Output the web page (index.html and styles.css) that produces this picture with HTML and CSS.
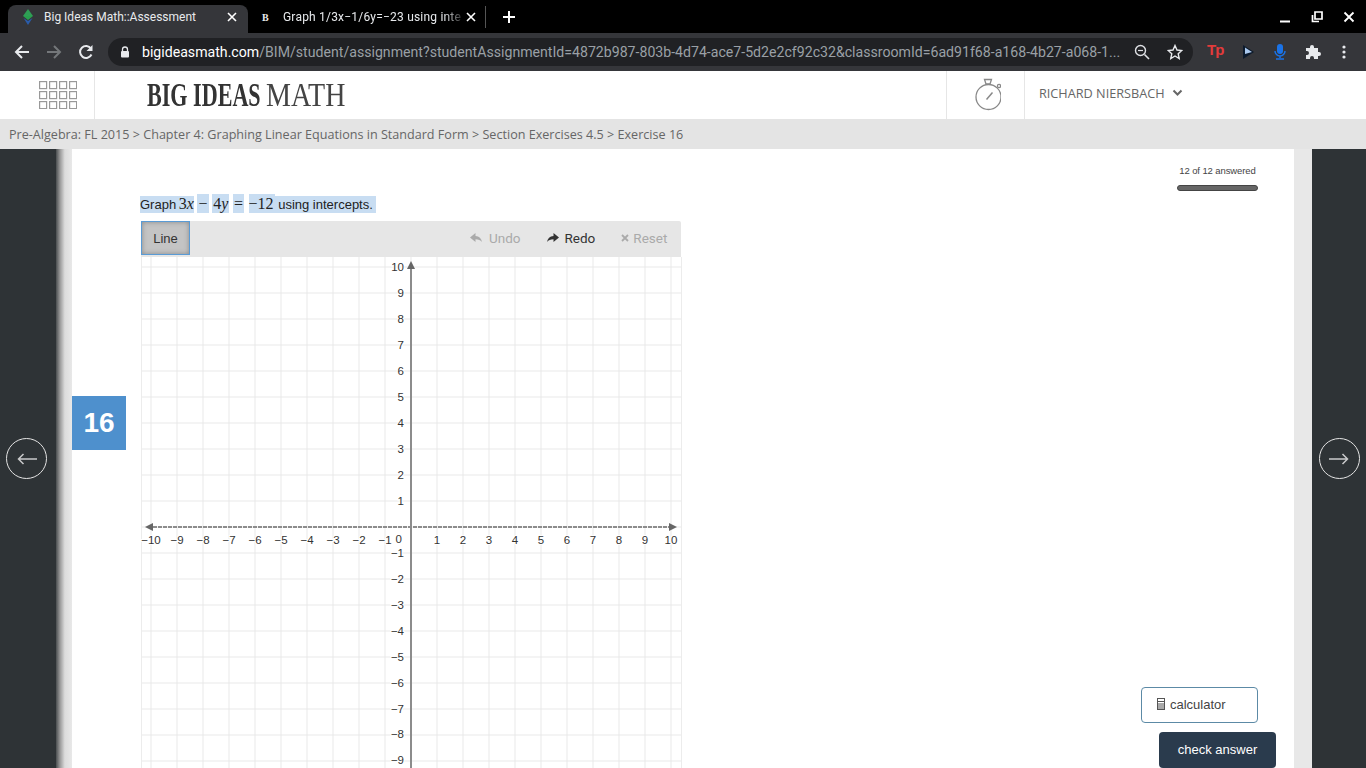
FILE: index.html
```html
<!DOCTYPE html>
<html lang="en">
<head>
  <meta charset="utf-8">
  <title>Big Ideas Math::Assessment</title>
  <link rel="stylesheet" href="styles.css">
</head>
<body>
<div class="tabbar">
  <div class="tab tab-active">
    <svg class="favicon" width="16" height="18" viewBox="0 0 16 18"><path d="M8 1l5 7H3z" fill="#2f9e55"/><path d="M3 8h10l-5 4z" fill="#27a04e"/><path d="M3.5 10L8 17l4.5-7L8 13z" fill="#2a5caa"/></svg>
    <span class="tab-title">Big Ideas Math::Assessment</span>
    <svg class="tab-x" width="10" height="10" viewBox="0 0 10 10"><path d="M1 1l8 8M9 1l-8 8" stroke="#fff" stroke-width="1.6"/></svg>
  </div>
  <div class="tab tab-other">
    <span class="favicon-b">B</span>
    <span class="tab-title tab-fade">Graph 1/3x−1/6y=−23 using inte</span>
    <svg class="tab-x" width="10" height="10" viewBox="0 0 10 10"><path d="M1 1l8 8M9 1l-8 8" stroke="#fff" stroke-width="1.6"/></svg>
  </div>
  <svg class="new-tab" width="14" height="14" viewBox="0 0 14 14"><path d="M7 1v12M1 7h12" stroke="#fff" stroke-width="2"/></svg>
  <div class="win-btns">
    <svg width="12" height="12" viewBox="0 0 12 12"><path d="M1 10.5h10" stroke="#fff" stroke-width="2"/></svg>
    <svg width="12" height="12" viewBox="0 0 12 12"><path d="M4 1h7v7H4z M1.500 4v6.500H8" fill="none" stroke="#fff" stroke-width="1.700"/></svg>
    <svg width="12" height="12" viewBox="0 0 12 12"><path d="M1.500 1.500l9 9M10.500 1.500l-9 9" stroke="#fff" stroke-width="1.800"/></svg>
  </div>
</div>

<div class="toolbar">
  <svg class="tool" width="16" height="16" viewBox="0 0 16 16"><path d="M15 8H2M8 2L2 8l6 6" fill="none" stroke="#e8eaed" stroke-width="2"/></svg>
  <svg class="tool" width="16" height="16" viewBox="0 0 16 16"><path d="M1 8h13M8 2l6 6-6 6" fill="none" stroke="#74777a" stroke-width="2"/></svg>
  <svg class="tool" width="16" height="16" viewBox="0 0 16 16"><path d="M13.500 10.500A6 6 0 1 1 13 4.500" fill="none" stroke="#e8eaed" stroke-width="2"/><path d="M14.500 1v6h-6z" fill="#e8eaed"/></svg>
  <div class="omnibox">
    <svg width="10" height="12" viewBox="0 0 10 12"><path d="M2.500 5V3.500a2.500 2.500 0 0 1 5 0V5" fill="none" stroke="#e8eaed" stroke-width="1.300"/><rect x="1" y="5" width="8" height="6.500" rx="1" fill="#e8eaed"/></svg>
    <span class="url"><b>bigideasmath.com</b>/BIM/student/assignment?studentAssignmentId=4872b987-803b-4d74-ace7-5d2e2cf92c32&amp;classroomId=6ad91f68-a168-4b27-a068-1...</span>
    <svg width="16" height="16" viewBox="0 0 16 16"><circle cx="6.500" cy="6.500" r="5" fill="none" stroke="#dfe1e5" stroke-width="1.400"/><path d="M10.500 10.500l4.500 4.500" stroke="#dfe1e5" stroke-width="1.600"/><path d="M4 6.500h5" stroke="#dfe1e5" stroke-width="1.200"/></svg>
    <svg class="star" width="16" height="16" viewBox="0 0 16 16"><path d="M8 1.500l2 4.500 4.800.5-3.600 3.200 1 4.800L8 12l-4.200 2.500 1-4.800L1.200 6.500 6 6z" fill="none" stroke="#e8eaed" stroke-width="1.400"/></svg>
  </div>
  <div class="ext-icons">
    <span class="ext-tp">Tp</span>
    <svg width="14" height="16" viewBox="0 0 14 16"><path d="M2 1l11 7-11 7z" fill="#0c1a2c"/><path d="M4 3.500l7 4.500-7 2z" fill="#a9c8ee"/></svg>
    <svg width="14" height="18" viewBox="0 0 14 18"><rect x="4" y="1" width="6" height="10" rx="3" fill="#1a73e8"/><path d="M2 8a5 5 0 0 0 10 0M7 13v2M3 16h8" fill="none" stroke="#1a73e8" stroke-width="1.500"/></svg>
    <svg width="16" height="16" viewBox="0 0 16 16"><path d="M1 4h4V3a2 2 0 0 1 4 0v1h4v4h1a2 2 0 0 1 0 4h-1v3H9v-1a2 2 0 0 0-4 0v1H1v-4h1a2 2 0 0 0 0-4H1z" fill="#e8eaed"/></svg>
    <svg class="ext-dots" width="4" height="16" viewBox="0 0 4 16"><circle cx="2" cy="3" r="1.600" fill="#e8eaed"/><circle cx="2" cy="8" r="1.600" fill="#e8eaed"/><circle cx="2" cy="13" r="1.600" fill="#e8eaed"/></svg>
  </div>
</div>

<header class="site-head">
  <div class="apps-cell">
    <svg width="38" height="28" viewBox="0 0 38 28" fill="none" stroke="#999" stroke-width="1.200">
      <rect x=".6" y=".6" width="7" height="7"/><rect x="10.600" y=".6" width="7" height="7"/><rect x="20.600" y=".6" width="7" height="7"/><rect x="30.600" y=".6" width="7" height="7"/>
      <rect x=".6" y="10.600" width="7" height="7"/><rect x="10.600" y="10.600" width="7" height="7"/><rect x="20.600" y="10.600" width="7" height="7"/><rect x="30.600" y="10.600" width="7" height="7"/>
      <rect x=".6" y="20.600" width="7" height="7"/><rect x="10.600" y="20.600" width="7" height="7"/><rect x="20.600" y="20.600" width="7" height="7"/><rect x="30.600" y="20.600" width="7" height="7"/>
    </svg>
  </div>
  <div class="logo"><span class="logo-big">BIG IDEAS</span><span class="logo-math">MATH</span></div>
  <div class="timer-cell">
    <svg width="30" height="34" viewBox="0 0 30 34" fill="none" stroke="#888" stroke-width="1.300">
      <circle cx="17.500" cy="19" r="12.500"/><path d="M13.500 1.500h7l-1.500 4.500h-4z"/><circle cx="28" cy="8" r="1.600"/><path d="M15.500 21.500l6-7" stroke-width="1.500"/>
    </svg>
  </div>
  <div class="user-cell">
    <span>RICHARD NIERSBACH</span>
    <svg width="11" height="8" viewBox="0 0 11 8"><path d="M1.500 1.500l4 4 4-4" fill="none" stroke="#666" stroke-width="2"/></svg>
  </div>
</header>

<nav class="crumbs">Pre-Algebra: FL 2015 &gt; Chapter 4: Graphing Linear Equations in Standard Form &gt; Section Exercises 4.5 &gt; Exercise 16</nav>

<main class="stage">
  <aside class="side">
    <div class="nav-circle"><svg width="20" height="12" viewBox="0 0 20 12"><path d="M20 6H1.500M6.500 1L1.500 6l5 5" fill="none" stroke="#c9cacb" stroke-width="1.500"/></svg></div>
  </aside>
  <div class="gutter gutter-left"></div>
  <section class="sheet">
    <div class="qnum">16</div>
    <div class="question">
      <p class="prompt"><span class="sel">Graph <span class="m m-first">3<i>x</i></span></span> <span class="sel m m-op">−</span> <span class="sel m m-op">4<i>y</i></span> <span class="sel m m-op">=</span> <span class="sel m m-neg">−12</span><span class="sel">&nbsp;using intercepts.&nbsp;</span></p>
      <div class="graph-tools">
        <button class="btn-line" type="button">Line</button>
        <span class="tool-item tool-off tool-undo"><svg width="13" height="10" viewBox="0 0 13 10"><path d="M5.500 0L0 4.500 5.500 9V6.300c3 0 5 .8 6.500 2.700-.5-3.500-2.800-5.700-6.500-6z" fill="#aaa"/></svg>Undo</span>
        <span class="tool-item tool-redo"><svg width="13" height="10" viewBox="0 0 13 10"><path d="M7.500 0L13 4.500 7.500 9V6.300c-3 0-5 .8-6.500 2.700.5-3.500 2.800-5.700 6.500-6z" fill="#333"/></svg>Redo</span>
        <span class="tool-item tool-off tool-reset"><svg width="8" height="8" viewBox="0 0 8 8"><path d="M1 1l6 6M7 1L1 7" stroke="#aaa" stroke-width="1.800"/></svg>Reset</span>
      </div>
      <svg class="plot" width="541" height="511" viewBox="-270 -270 541 511">
        <defs>
          <pattern id="cells" patternUnits="userSpaceOnUse" x="-.5" y="-.5" width="26" height="26">
            <path d="M.5 0V26M0 .5H26" fill="none" stroke="#e8e8e8" stroke-width="1"/>
          </pattern>
        </defs>
        <rect x="-270" y="-270" width="541" height="511" fill="url(#cells)"/>
        <path d="M-269.500 -270V241M270.500 -270V241" stroke="#ececec"/>
        <path d="M-258 0H262" stroke="#8c8c8c" stroke-width="2" stroke-dasharray="4 1"/>
        <path d="M0 -258V241" stroke="#8c8c8c" stroke-width="2"/>
        <path d="M-266 0l8-4v8zM266 0l-8-4v8zM0 -266l-4 8h8z" fill="#666"/>
        <g class="ticks-x" text-anchor="middle">
          <text x="-260" y="17">−10</text><text x="-234" y="17">−9</text><text x="-208" y="17">−8</text><text x="-182" y="17">−7</text><text x="-156" y="17">−6</text><text x="-130" y="17">−5</text><text x="-104" y="17">−4</text><text x="-78" y="17">−3</text><text x="-52" y="17">−2</text><text x="-26" y="17">−1</text>
          <text x="26" y="17">1</text><text x="52" y="17">2</text><text x="78" y="17">3</text><text x="104" y="17">4</text><text x="130" y="17">5</text><text x="156" y="17">6</text><text x="182" y="17">7</text><text x="208" y="17">8</text><text x="234" y="17">9</text><text x="260" y="17">10</text>
        </g>
        <g class="ticks-y" text-anchor="end">
          <text x="-7" y="-256">10</text><text x="-7" y="-230">9</text><text x="-7" y="-204">8</text><text x="-7" y="-178">7</text><text x="-7" y="-152">6</text><text x="-7" y="-126">5</text><text x="-7" y="-100">4</text><text x="-7" y="-74">3</text><text x="-7" y="-48">2</text><text x="-7" y="-22">1</text>
          <text x="-9" y="16">0</text>
          <text x="-7" y="30">−1</text><text x="-7" y="56">−2</text><text x="-7" y="82">−3</text><text x="-7" y="108">−4</text><text x="-7" y="134">−5</text><text x="-7" y="160">−6</text><text x="-7" y="186">−7</text><text x="-7" y="211">−8</text><text x="-7" y="237">−9</text>
        </g>
      </svg>
    </div>
    <div class="actions">
      <div class="progress">
        <span class="progress-label">12 of 12 answered</span>
        <div class="progress-bar"></div>
      </div>
      <button class="btn-calc" type="button">
        <svg width="8" height="12" viewBox="0 0 8 12"><rect x=".5" y=".5" width="7" height="11" fill="none" stroke="#555"/><path d="M1 3h6v1H1zM1 5.500h6v1H1zM1 7.500h6v1H1zM1 9.500h6v1H1z" fill="#555"/></svg>
        calculator
      </button>
      <button class="btn-check" type="button">check answer</button>
    </div>
  </section>
  <div class="gutter gutter-right"></div>
  <aside class="side">
    <div class="nav-circle"><svg width="20" height="12" viewBox="0 0 20 12"><path d="M0 6h18.500M13.500 1l5 5-5 5" fill="none" stroke="#c9cacb" stroke-width="1.500"/></svg></div>
  </aside>
</main>
</body>
</html>
```

FILE: styles.css
```css
* {
  box-sizing: border-box;
}
html, body {
  margin: 0;
  height: 768px;
  overflow: hidden;
}
body {
  font-family: "Liberation Sans", Arial, sans-serif;
  background-color: #fff;
  display: flex;
  flex-direction: column;
}

/* browser chrome */
.tabbar {
  height: 33px;
  background-color: #000;
  display: flex;
  align-items: flex-end;
  padding-left: 8px;
  font-family: Roboto, sans-serif;
  font-size: 12px;
  color: #e8eaed;
}
.tab {
  height: 28px;
  width: 240px;
  display: flex;
  align-items: center;
  padding: 0 11px 5px 12px;
}
.tab-active {
  background-color: #35363a;
  border-radius: 8px 8px 0 0;
}
.tab-other {
  width: 238px;
  border-right: 1px solid #555;
  height: 22px;
  margin-bottom: 5px;
  padding: 0 9px 0 14px;
}
.favicon {
  flex: none;
  margin-right: 8px;
}
.favicon-b {
  font-family: "Liberation Serif", serif;
  font-weight: 700;
  font-size: 10px;
  width: 21px;
}
.tab-title {
  flex: 1;
  white-space: nowrap;
  overflow: hidden;
}
.tab-fade {
  letter-spacing: .2px;
  -webkit-mask-image: linear-gradient(to right, #000 88%, transparent);
  mask-image: linear-gradient(to right, #000 88%, transparent);
}
.new-tab {
  margin: 0 0 9px 16px;
}
.win-btns {
  margin-left: auto;
  display: flex;
  gap: 20px;
  padding: 0 11px 10px 0;
}

.toolbar {
  height: 38px;
  background-color: #35363a;
  display: flex;
  align-items: center;
  padding-left: 14px;
  gap: 16px;
}
.omnibox {
  width: 1085px;
  height: 28px;
  margin-left: -2px;
  padding: 0 10px 0 12px;
  border-radius: 14px;
  background-color: #202124;
  display: flex;
  align-items: center;
  gap: 10px;
}
.url {
  flex: 1;
  margin-left: 2px;
  font-family: Roboto, sans-serif;
  font-size: 14.13px;
  color: #9aa0a6;
  white-space: nowrap;
  overflow: hidden;
}
.url b {
  font-weight: 400;
  color: #fff;
}
.star {
  margin-left: 7px;
}
.ext-icons {
  display: flex;
  align-items: center;
  gap: 18px;
  margin-left: -2px;
}
.ext-tp {
  color: #e33b3b;
  font-weight: 700;
  font-size: 15px;
  letter-spacing: -1px;
  margin-bottom: 5px;
}
.ext-dots {
  margin-left: 3px;
}

/* site header */
.site-head {
  height: 48px;
  background-color: #fff;
  display: flex;
  align-items: stretch;
}
.apps-cell {
  width: 95px;
  border-right: 1px solid #e6e6e6;
  display: flex;
  align-items: center;
  padding-left: 39px;
}
.logo {
  margin-left: 52px;
  width: 199px;
  display: flex;
  line-height: 48px;
  color: #333;
  font-family: "Liberation Serif", serif;
  font-size: 33px;
  white-space: nowrap;
}
.logo-big {
  flex: none;
  width: 119px;
  font-weight: 700;
  transform: scaleX(.67);
  transform-origin: left center;
}
.logo-math {
  flex: none;
  font-weight: 400;
  color: #444;
  transform: scaleX(.85);
  transform-origin: left center;
}
.timer-cell {
  margin-left: auto;
  width: 79px;
  border-left: 1px solid #e6e6e6;
  border-right: 1px solid #e6e6e6;
  display: flex;
  align-items: center;
  justify-content: center;
}
.user-cell {
  width: 341px;
  padding: 0 0 5px 14px;
  display: flex;
  align-items: center;
  gap: 7px;
  font-family: "Open Sans", sans-serif;
  font-size: 12.7px;
  color: #666;
}

.crumbs {
  height: 30px;
  background-color: #e4e4e4;
  padding-left: 9px;
  line-height: 32px;
  font-family: "Open Sans", sans-serif;
  font-size: 12.6px;
  color: #666;
  white-space: nowrap;
}

/* page body */
.stage {
  flex: 1;
  min-height: 0;
  display: flex;
}
.side {
  width: 54px;
  background-color: #2e3336;
  display: flex;
  align-items: center;
  justify-content: center;
}
.stage .side:first-child {
  width: 56px;
  justify-content: flex-start;
  padding-left: 6px;
}
.nav-circle {
  width: 41px;
  height: 41px;
  border: 1.5px solid #e4e4e4;
  border-radius: 50%;
  display: flex;
  align-items: center;
  justify-content: center;
}
.gutter {
  background-color: #e8e8e8;
}
.gutter-left {
  width: 16px;
  background: linear-gradient(to right, #4a4e50, #999 25%, #dcdcdc 55%, #e8e8e8);
}
.gutter-right {
  width: 18px;
}
.sheet {
  flex: 1;
  background-color: #fff;
  display: flex;
  overflow: hidden;
}
.qnum {
  flex: none;
  width: 54px;
  height: 54px;
  margin: 247px 15px 0 0;
  background-color: #4e90cd;
  color: #fff;
  font-size: 28px;
  font-weight: 700;
  line-height: 54px;
  text-align: center;
}
.question {
  width: 541px;
  flex: none;
}
.prompt {
  margin: 46px 0 0 -1px;
  height: 26px;
  font-size: 13px;
  line-height: 18px;
  color: #222;
  white-space: nowrap;
}
.sel {
  background-color: #c8ddf2;
  padding: 1px 0;
}
.m {
  font-family: "Liberation Serif", serif;
  font-size: 16px;
}
.m-first {
  margin-left: -1px;
}
.m-op {
  padding: 1px;
}
.m-neg {
  margin-left: 1px;
  padding: 1px 1px 1px 0;
}

.graph-tools {
  height: 36px;
  margin-right: 1px;
  background-color: #e6e6e6;
  border-radius: 2px 2px 0 0;
  display: flex;
  align-items: flex-start;
  font-family: Roboto, sans-serif;
  font-size: 13.5px;
}
.btn-line {
  width: 49px;
  height: 34px;
  margin-right: 280px;
  padding: 0;
  background-color: #c4c4c4;
  border: 1px solid #5a9bd5;
  box-shadow: inset 0 0 5px #8a8a8a;
  font: 13px "Liberation Sans", sans-serif;
  color: #333;
}
.tool-item {
  display: flex;
  align-items: center;
  gap: 6px;
  height: 34px;
}
.tool-off {
  color: #aaa;
}
.tool-redo {
  color: #333;
  margin: 0 26px 0 25px;
}
.tool-reset {
  gap: 4px;
}
.plot {
  display: block;
}
.plot text {
  font-size: 11.5px;
  font-family: "Liberation Sans", sans-serif;
  fill: #333;
  stroke: #fff;
  stroke-width: 2px;
  paint-order: stroke;
}

/* right column */
.actions {
  margin-left: auto;
  width: 135px;
  margin-right: 18px;
  display: flex;
  flex-direction: column;
  align-items: flex-start;
}
.progress {
  margin: 16px 0 0 36px;
  width: 81px;
  text-align: center;
  height: 522px;
}
.progress-label {
  display: block;
  font-size: 9.5px;
  letter-spacing: -.1px;
  color: #444;
  white-space: nowrap;
}
.progress-bar {
  height: 6px;
  margin-top: 9px;
  background-color: #666;
  border-radius: 3px;
  border: 1px solid #444;
}
.btn-calc {
  width: 117px;
  height: 36px;
  background-color: #fff;
  border: 1px solid #5c8aa6;
  border-radius: 4px;
  padding: 0 0 2px 15px;
  display: flex;
  align-items: center;
  gap: 5px;
  font: 13px "Liberation Sans", sans-serif;
  color: #444;
}
.btn-check {
  width: 117px;
  height: 36px;
  margin: 9px 0 0 18px;
  padding: 0 0 2px;
  background-color: #2a3b4d;
  border: 0;
  border-radius: 4px;
  font: 13px "Liberation Sans", sans-serif;
  color: #fff;
}
```
